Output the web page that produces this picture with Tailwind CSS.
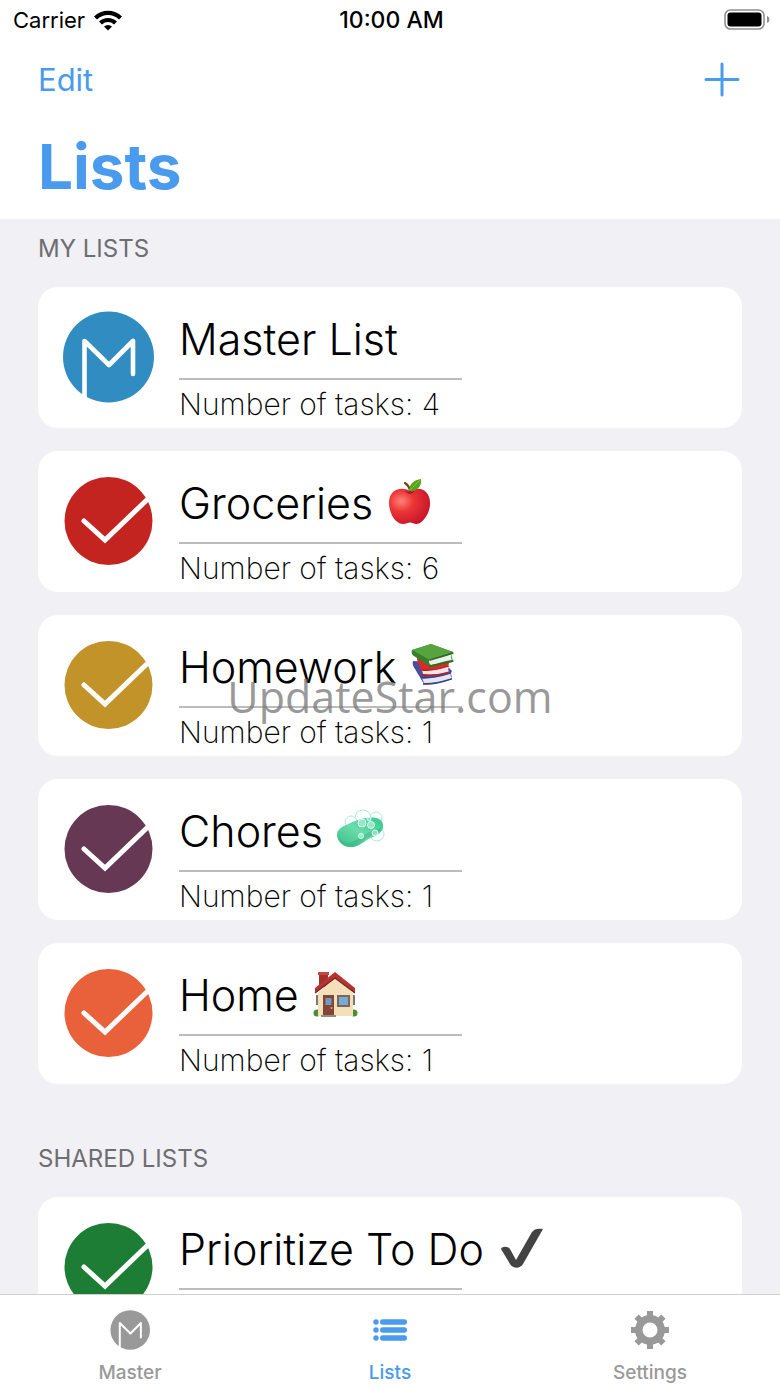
<!DOCTYPE html>
<html lang="en">
<head>
    <meta charset="UTF-8">
    <meta name="viewport" content="width=device-width, initial-scale=1.0">
    <title>Lists</title>
    <script src="https://cdn.jsdelivr.net/npm/@tailwindcss/browser@4"></script>
</head>
<body class="bg-[#f1f0f5] font-['Inter','Liberation_Sans',sans-serif] text-black">

    <!-- Shared shapes -->
    <svg class="hidden" aria-hidden="true">
        <symbol id="check" viewBox="0 0 92 92">
            <circle cx="46.5" cy="46" r="44" fill="currentColor"/>
            <path d="M22 46 43 65 90 20" fill="none" stroke="#fff" stroke-width="5" stroke-linecap="round"/>
        </symbol>
        <symbol id="master" viewBox="0 0 92 92">
            <circle cx="46.500" cy="46" r="45.500" fill="currentColor"/>
            <path d="M22.500 92V30L47 54 71 30V63" fill="none" stroke="#fff" stroke-width="4.600" stroke-linecap="round" stroke-linejoin="round"/>
        </symbol>
    </svg>

    <div class="relative flex h-screen flex-col overflow-hidden">
        <header class="bg-white">
            <div class="grid h-10 grid-cols-3 items-center pl-[13px] pr-[10px] text-[22px]">
                <div class="flex items-center gap-2">
                    <span>Carrier</span>
                    <svg class="h-[22px] w-[30px]" viewBox="0 0 30 22">
                        <path d="M1 7.500a20 20 0 0 1 28 0l-3 3a15.700 15.700 0 0 0-22 0z"/>
                        <path d="M6 12.500a13 13 0 0 1 18 0l-3 3a8.700 8.700 0 0 0-12 0z"/>
                        <path d="M15 21.500l-4-4a6 6 0 0 1 8 0z"/>
                    </svg>
                </div>
                <span class="text-center text-[23px] font-medium">10:00 AM</span>
                <svg class="h-[22px] w-[46px] justify-self-end" viewBox="0 0 46 22">
                    <rect x="1" y="1" width="39" height="19" rx="5.500" fill="#fff" stroke="#8f8f8f" stroke-width="1.600"/>
                    <rect x="3.500" y="3.500" width="34" height="14" rx="3" fill="#000"/>
                    <path d="M43 7c3.200 1 3.200 6 0 7z" fill="#8f8f8f"/>
                </svg>
            </div>
            <div class="flex h-20 items-center justify-between px-[38px] text-[#4a9aee]">
                <button type="button" class="text-[31px]">Edit</button>
                <button type="button" aria-label="Add list">
                    <svg class="size-10" viewBox="0 0 40 40" fill="none" stroke="currentColor" stroke-width="3" stroke-linecap="round">
                        <path d="M20 4v31M4 19.500h32"/>
                    </svg>
                </button>
            </div>
            <h1 class="h-[99px] px-[38px] pt-2 text-[62px] leading-[78px] font-bold text-[#4a9aee]">Lists</h1>
        </header>

        <main class="min-h-0 flex-1 overflow-hidden px-[38px]">
            <h2 class="pt-3 pb-5 text-[24px] leading-9 text-[#6d6d72]">MY LISTS</h2>
            <ul class="flex flex-col gap-[23px]">
                <li>
                    <a href="#" class="flex gap-[25px] rounded-[20px] bg-white px-6 pb-[6px]">
                        <svg class="mt-6 size-[92px] shrink-0 text-[#318dc1]"><use href="#master"/></svg>
                        <div class="pt-[26px]">
                            <h3 class="flex h-[52px] items-center gap-3 text-[43px] font-light whitespace-nowrap">Master List</h3>
                            <hr class="mt-[13px] w-[283px] border-t-2 border-[#bcbcbc]">
                            <p class="mt-[6px] text-[30px] leading-9 font-extralight">Number of tasks: 4</p>
                        </div>
                    </a>
                </li>
                <li>
                    <a href="#" class="flex gap-[25px] rounded-[20px] bg-white px-6 pb-[6px]">
                        <svg class="mt-6 size-[92px] shrink-0 text-[#c32420]"><use href="#check"/></svg>
                        <div class="pt-[26px]">
                            <h3 class="flex h-[52px] items-center gap-3 text-[43px] font-light whitespace-nowrap">Groceries
                                <svg class="size-[50px]" viewBox="0 0 50 50" role="img" aria-label="Apple">
                                    <defs>
                                        <radialGradient id="apple" cx=".3" cy=".35" r=".75">
                                            <stop offset="0" stop-color="#ff8278"/>
                                            <stop offset=".4" stop-color="#ec3535"/>
                                            <stop offset="1" stop-color="#c4142a"/>
                                        </radialGradient>
                                    </defs>
                                    <path d="M25 13c5-3 12-3 16 1 5 5 5 14 2 21-3 6-7 11-12 11-2 0-4-1.500-6-1.500S21 46 18 46C13 46 8 41 6 35c-3-8-3-16 2-21 5-4 12-4 17-1z" fill="url(#apple)"/>
                                    <path d="M20 12c3 3 7 3 10 0-2 5-8 5-10 0z" fill="#9d1420"/>
                                    <path d="M25 14c0-4-2-7-5-9" fill="none" stroke="#70402c" stroke-width="2.200" stroke-linecap="round"/>
                                    <path d="M24 13C24 6 29 2 36 1c1 7-4 13-12 12z" fill="#55a51d"/>
                                    <path d="M25 12c3-3 6-6 10-10" stroke="#83c642" fill="none"/>
                                </svg>
                            </h3>
                            <hr class="mt-[13px] w-[283px] border-t-2 border-[#bcbcbc]">
                            <p class="mt-[6px] text-[30px] leading-9 font-extralight">Number of tasks: 6</p>
                        </div>
                    </a>
                </li>
                <li>
                    <a href="#" class="flex gap-[25px] rounded-[20px] bg-white px-6 pb-[6px]">
                        <svg class="mt-6 size-[92px] shrink-0 text-[#c29329]"><use href="#check"/></svg>
                        <div class="pt-[26px]">
                            <h3 class="flex h-[52px] items-center gap-3 text-[43px] font-light whitespace-nowrap">Homework
                                <svg class="size-[50px]" viewBox="0 0 50 50" role="img" aria-label="Books">
                                    <path d="M5 19c-1 3 0 5 2 8l9 15c9 1 19-2 28-5l-1-6 1-2-8-8z" fill="#454f9f"/>
                                    <path d="M14 36c9 1 20-2 29-5-1 2 0 4 1 5-9 3-18 5-28 5z" fill="#e7e5ed"/>
                                    <path d="M14 36c9 0 20-2 29-5M15 42c9 1 20-2 29-5" fill="none" stroke="#343d88" stroke-width="1.300"/>
                                    <path d="M9 16c0 3 1 5 2 7l4 10c8 2 18 0 26-2l-1-6 1-4-9-5z" fill="#d82a29"/>
                                    <path d="M14 28c9 1 18-1 27-4-1 2-1 4 0 6-9 2-17 3-26 2z" fill="#eee7e8"/>
                                    <path d="M14 28c9 1 18-1 27-4M14 33c9 1 18 0 27-3" fill="none" stroke="#b71d20" stroke-width="1.300"/>
                                    <path d="M4 8 23 2l22 8-1 3c0 4 1 5 1 7-7 1-15 4-23 5L6 14c-2-1-3-4-2-6z" fill="#367f2c"/>
                                    <path d="M4 8 23 2l22 8-23 8z" fill="#55a43e"/>
                                    <path d="M21 18c7-1 15-3 23-6-1 3-1 4 0 6-8 1-15 4-21 5-2-1-2-3-2-5z" fill="#efefec"/>
                                    <path d="M22 18 45 11M22 24l23-5" fill="none" stroke="#286d21" stroke-width="1.500" stroke-linecap="round"/>
                                </svg>
                            </h3>
                            <hr class="mt-[13px] w-[283px] border-t-2 border-[#bcbcbc]">
                            <p class="mt-[6px] text-[30px] leading-9 font-extralight">Number of tasks: 1</p>
                        </div>
                    </a>
                </li>
                <li>
                    <a href="#" class="flex gap-[25px] rounded-[20px] bg-white px-6 pb-[6px]">
                        <svg class="mt-6 size-[92px] shrink-0 text-[#663853]"><use href="#check"/></svg>
                        <div class="pt-[26px]">
                            <h3 class="flex h-[52px] items-center gap-3 text-[43px] font-light whitespace-nowrap">Chores
                                <svg class="size-[50px]" viewBox="0 0 50 50" role="img" aria-label="Soap">
                                    <defs>
                                        <linearGradient id="soap" x1="0" y1="1" x2="1" y2="0">
                                            <stop offset="0" stop-color="#35bd88"/>
                                            <stop offset=".5" stop-color="#6bdbab"/>
                                            <stop offset="1" stop-color="#38c691"/>
                                        </linearGradient>
                                    </defs>
                                    <g fill="#fbfffe" stroke="#b4e8d7">
                                        <circle cx="28" cy="12" r="8"/>
                                        <circle cx="41" cy="12" r="6"/>
                                        <circle cx="16" cy="16" r="6"/>
                                        <circle cx="42" cy="28" r="7"/>
                                    </g>
                                    <path d="M2 29c0-5 4-8 9-10 9-4 20-9 30-7 6 1 8 6 7 10-1 6-9 8-16 12-6 4-11 8-17 7C8 41 2 35 2 29z" fill="url(#soap)"/>
                                    <path d="M4 31c2 5 8 7 13 5 7-3 11-8 18-10 6-2 11-4 12-5-1 6-8 7-15 11-6 4-11 9-17 9C10 41 4 37 4 31z" fill="#2eae7d" opacity=".4"/>
                                    <g fill="#e9fff7" fill-opacity=".45" stroke="#d2fff0">
                                        <circle cx="27" cy="17" r="4"/>
                                        <circle cx="36" cy="19" r="3.500"/>
                                        <circle cx="34" cy="13" r="2"/>
                                        <circle cx="26" cy="30" r="2.500"/>
                                        <circle cx="40" cy="27" r="3"/>
                                    </g>
                                </svg>
                            </h3>
                            <hr class="mt-[13px] w-[283px] border-t-2 border-[#bcbcbc]">
                            <p class="mt-[6px] text-[30px] leading-9 font-extralight">Number of tasks: 1</p>
                        </div>
                    </a>
                </li>
                <li>
                    <a href="#" class="flex gap-[25px] rounded-[20px] bg-white px-6 pb-[6px]">
                        <svg class="mt-6 size-[92px] shrink-0 text-[#e9613a]"><use href="#check"/></svg>
                        <div class="pt-[26px]">
                            <h3 class="flex h-[52px] items-center gap-3 text-[43px] font-light whitespace-nowrap">Home
                                <svg class="size-[50px]" viewBox="0 0 50 50" role="img" aria-label="House">
                                    <g fill="#4d8c32">
                                        <circle cx="6" cy="43" r="3.500"/>
                                        <circle cx="43" cy="43" r="3.500"/>
                                    </g>
                                    <path d="M8 3h9v14H8z" fill="#a52f2d"/>
                                    <path d="M7 2h11v3H7z" fill="#c54840"/>
                                    <path d="M7 23 24 7l18 16v23H7z" fill="#f3dfb9"/>
                                    <path d="M4 18 24 2l20 16v5L24 8 4 23z" fill="#b83330"/>
                                    <path d="M4 23 24 8l20 15" fill="none" stroke="#722522" stroke-width="1.300"/>
                                    <path d="M12 25h11v21H12z" fill="#834634"/>
                                    <path d="M14.500 28h6v7h-6z" fill="#6d9bc8"/>
                                    <circle cx="20.500" cy="38" r="1" fill="#e9af50"/>
                                    <path d="M26 25h13v12H26z" fill="#7d6655"/>
                                    <path d="M28 27h9v8h-9z" fill="#75acd8"/>
                                    <path d="M5 25h2v10H5zM42 25h2v10h-2z" fill="#777977"/>
                                    <path d="M10 45h15v2H10z" fill="#9b8a7b"/>
                                </svg>
                            </h3>
                            <hr class="mt-[13px] w-[283px] border-t-2 border-[#bcbcbc]">
                            <p class="mt-[6px] text-[30px] leading-9 font-extralight">Number of tasks: 1</p>
                        </div>
                    </a>
                </li>
            </ul>

            <h2 class="pt-[57px] pb-5 text-[24px] leading-9 text-[#6d6d72]">SHARED LISTS</h2>
            <ul>
                <li>
                    <a href="#" class="flex gap-[25px] rounded-[20px] bg-white px-6 pb-[6px]">
                        <svg class="mt-6 size-[92px] shrink-0 text-[#1d7d35]"><use href="#check"/></svg>
                        <div class="pt-[26px]">
                            <h3 class="flex h-[52px] items-center gap-3 text-[43px] font-light whitespace-nowrap">Prioritize To Do
                                <svg class="size-[50px]" viewBox="0 0 50 50" role="img" aria-label="Done">
                                    <path d="M5 25c1-3 7-3 9 0l6 11L36 8c2-3 6-4 11-3L27 40c-3 5-10 5-13 0z" fill="#434343"/>
                                </svg>
                            </h3>
                            <hr class="mt-[13px] w-[283px] border-t-2 border-[#bcbcbc]">
                        </div>
                    </a>
                </li>
            </ul>
        </main>

        <nav class="grid h-[93px] shrink-0 grid-cols-3 border-t border-[#d0d0d3] bg-white text-[19px] leading-6 font-medium text-[#999]">
            <a href="#" class="flex flex-col items-center gap-[11px] pt-[15px]">
                <svg class="size-10"><use href="#master"/></svg>
                Master
            </a>
            <a href="#" class="flex flex-col items-center gap-[11px] pt-[15px] text-[#4a9aee]" aria-current="page">
                <svg class="size-10" viewBox="0 0 40 40" fill="currentColor">
                    <circle cx="6" cy="12" r="2.700"/>
                    <circle cx="6" cy="20" r="2.700"/>
                    <circle cx="6" cy="28" r="2.700"/>
                    <rect x="10" y="9.300" width="27" height="5.400" rx="2.700"/>
                    <rect x="10" y="17.300" width="27" height="5.400" rx="2.700"/>
                    <rect x="10" y="25.300" width="27" height="5.400" rx="2.700"/>
                </svg>
                Lists
            </a>
            <a href="#" class="flex flex-col items-center gap-[11px] pt-[15px]">
                <svg class="size-10" viewBox="0 0 40 40" fill="none" stroke="currentColor">
                    <circle cx="20" cy="20" r="11.250" stroke-width="7.500"/>
                    <path d="M20 1v7M20 32v7M1 20h7M32 20h7M6.600 6.600l5 5M28.400 28.400l5 5M6.600 33.400l5-5M28.400 11.600l5-5" stroke-width="6"/>
                </svg>
                Settings
            </a>
        </nav>

        <!-- Watermark -->
        <div class="pointer-events-none absolute inset-0 flex items-center justify-center pt-2 font-['Open_Sans','Noto_Sans',sans-serif] text-[43px] text-[#777]/75">UpdateStar.com</div>
    </div>

</body>
</html>
